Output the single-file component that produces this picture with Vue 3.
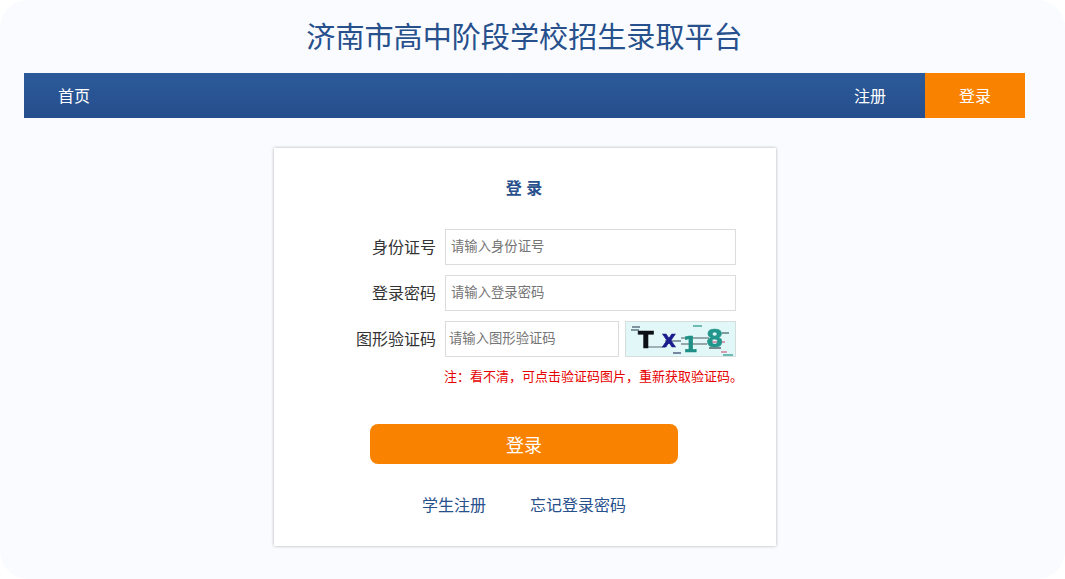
<template>
  <div class="page">
    <div class="wrap">
      <h1 class="title">济南市高中阶段学校招生录取平台</h1>
      <nav class="nav">
        <a class="nav-item home">首页</a>
        <a class="nav-item reg">注册</a>
        <a class="nav-item active">登录</a>
      </nav>
      <div class="card">
        <h2 class="card-title">登 录</h2>
        <form class="form" @submit.prevent>
          <label class="field-label">身份证号</label>
          <input class="field wide" type="text" placeholder="请输入身份证号" />
          <label class="field-label">登录密码</label>
          <input class="field wide" type="password" placeholder="请输入登录密码" />
          <label class="field-label">图形验证码</label>
          <div class="captcha-row">
            <input class="field code" type="text" placeholder="请输入图形验证码" />
            <svg class="captcha" viewBox="0 0 111 36" width="111" height="36">
              <rect x="0.5" y="0.5" width="110" height="35" fill="#e2f8f8" stroke="#d5dedd" />
              <g class="ink">
                <line v-for="(l, i) in noise" :key="i" :x1="l[0]" :y1="l[1]" :x2="l[2]" :y2="l[1]" :stroke="l[3]" stroke-width="1.3" />
                <text x="13" y="27" class="cap big" fill="#0c1016" stroke="#0c1016">T</text>
                <text x="37" y="26" class="cap small" fill="#1a1a8c" stroke="#1a1a8c">X</text>
                <text x="58" y="31" class="cap one" fill="#1f8f86" stroke="#1f8f86">1</text>
                <text x="81" y="26" class="cap eight" fill="#23968c" stroke="#23968c">8</text>
              </g>
            </svg>
          </div>
          <p class="note">注：看不清，可点击验证码图片，重新获取验证码。</p>
        </form>
        <button class="submit" type="button">登录</button>
        <div class="links">
          <a>学生注册</a>
          <a>忘记登录密码</a>
        </div>
      </div>
    </div>
  </div>
</template>

<script setup>
// captcha noise: x1, y, x2, colour
const noise = [
  [7, 6, 15, "#4a6070"],
  [6, 9, 14, "#4a6070"],
  [68, 5, 77, "#2f9a8f"],
  [97, 12, 104, "#4d6a6a"],
  [40, 20, 56, "#556677"],
  [56, 17, 84, "#6c7a80"],
  [84, 21, 100, "#c9688a"],
  [22, 26, 40, "#7a8a90"],
  [56, 23, 82, "#6c7a80"],
  [84, 27, 96, "#3a4a50"],
  [48, 32, 56, "#3a4a70"],
  [96, 31, 102, "#d06a8a"],
  [98, 34, 108, "#2f9a8f"],
];
</script>

<style scoped>
.page {
  width: 1065px;
  height: 579px;
  overflow: hidden;
  background: #f9fbff;
  border-radius: 28px;
  font-family: "Liberation Sans", "Noto Sans CJK SC", sans-serif;
}

.wrap {
  width: 1001px;
  margin-left: 24px;
}

.title {
  margin: 0;
  height: 73px;
  line-height: 77px;
  font-size: 29.1px;
  font-weight: normal;
  text-align: center;
  color: #27508c;
}

.nav {
  display: flex;
  height: 45px;
  background: linear-gradient(#2c5a9a, #264e8c);
}

.nav-item {
  width: 100px;
  line-height: 48px;
  font-size: 16px;
  text-align: center;
  color: #fff;
}

.home {
  margin-right: auto;
}

.reg {
  width: 110px;
}

.active {
  background: #f98200;
}

.card {
  box-sizing: border-box;
  width: 502px;
  height: 398px;
  margin: 30px 0 0 250px;
  padding-top: 32px;
  background: #fff;
  box-shadow: 0 0 3px rgba(0, 0, 0, 0.3);
}

.card-title {
  margin: 0;
  padding-right: 2px;
  line-height: 18px;
  font-size: 16px;
  font-weight: bold;
  text-align: center;
  color: #27508c;
}

.form {
  display: grid;
  grid-template-columns: 162px 291px;
  column-gap: 9px;
  row-gap: 10px;
  align-items: center;
  margin-top: 31px;
}

.field-label {
  padding-bottom: 2px;
  font-size: 16px;
  text-align: right;
  color: #333;
}

.field {
  box-sizing: border-box;
  height: 36px;
  padding: 0 5px 2px;
  border: 1px solid #dcdcdc;
  outline: none;
  font-family: inherit;
  font-size: 13.33px;
  color: #333;
}

.field::placeholder {
  color: #757575;
}

.wide {
  width: 291px;
}

.captcha-row {
  display: flex;
  justify-content: space-between;
}

.code {
  width: 174px;
  padding: 0 3px 2px;
}

.ink {
  filter: blur(0.5px);
}

.cap {
  font-family: "DejaVu Sans", sans-serif;
  font-weight: bold;
  stroke-width: 0.6;
}

.big {
  font-size: 23px;
}

.small {
  font-size: 18px;
}

.one {
  font-size: 21px;
}

.eight {
  font-size: 25px;
}

.note {
  grid-column: 2;
  margin: 0 -6px 0 -1px;
  line-height: 20px;
  font-size: 13px;
  white-space: nowrap;
  color: #e60000;
}

.submit {
  display: block;
  width: 308px;
  height: 40px;
  margin: 37px 0 0 96px;
  padding: 0;
  border: 0;
  border-radius: 8px;
  background: #f98200;
  font-family: inherit;
  font-size: 18px;
  color: #fff;
}

.links {
  display: flex;
  gap: 44px;
  margin: 32px 0 0 148px;
  line-height: 20px;
  font-size: 16px;
  color: #27508c;
}
</style>

<style>
html,
body {
  background: #fff;
}
</style>
